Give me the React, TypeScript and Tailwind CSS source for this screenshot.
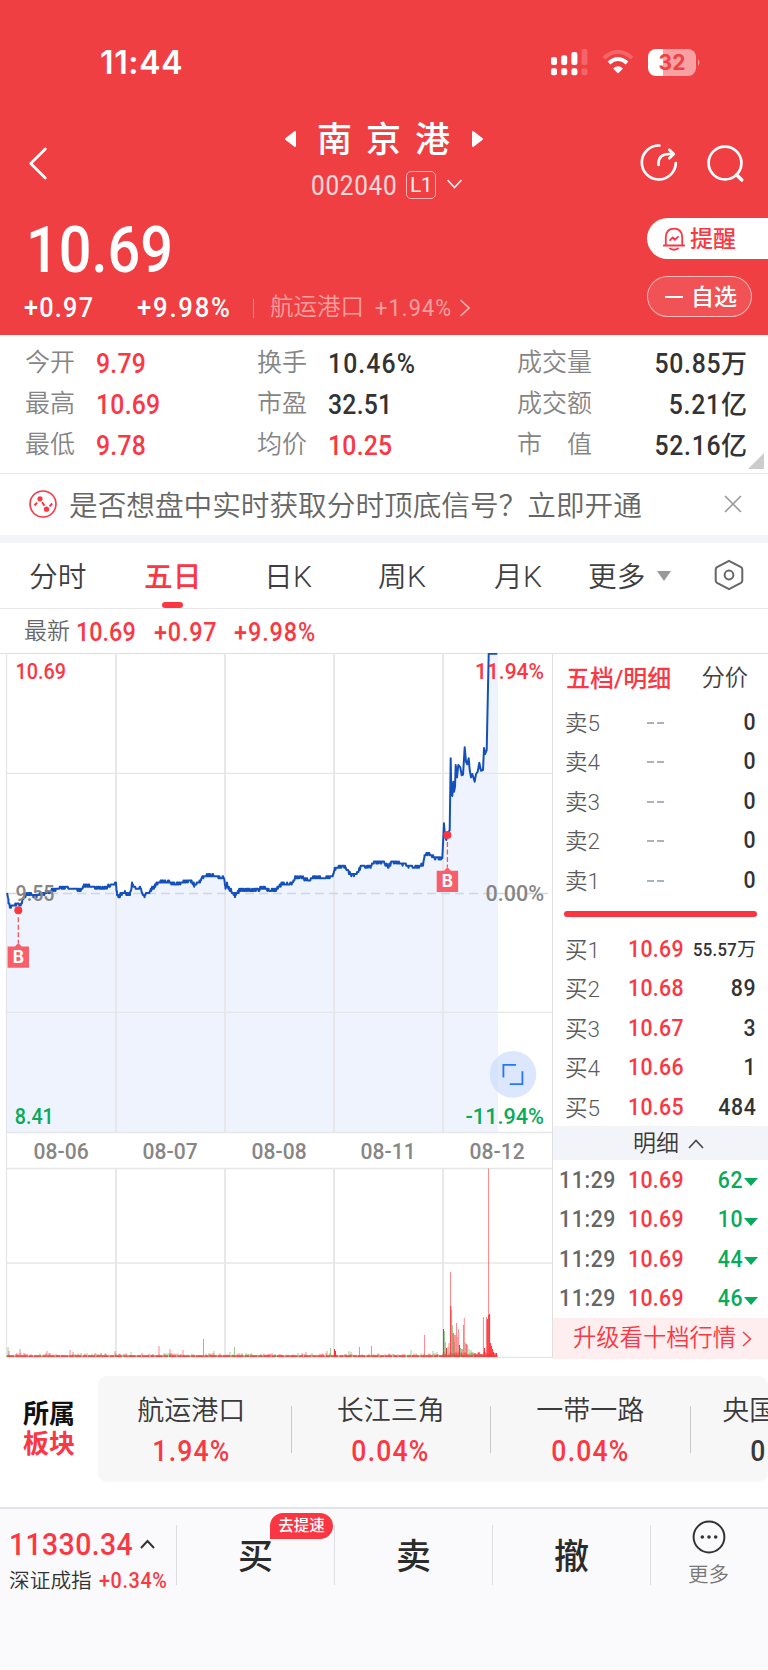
import React from "react";

const rand = (seed: number) => {
  let s = seed;
  return () => {
    s = (s * 1664525 + 1013904223) % 4294967296;
    return s / 4294967296;
  };
};

/* Slow sections of the price curve: anchors joined by one tick per minute. */
const calm: [number, number][] = [
  [7, 893], [8.5, 902], [10, 907], [13, 906], [17, 904], [21, 905], [24, 897], [27, 894], [36, 896], [45, 893],
  [49, 891], [57, 889], [66, 887], [72, 889], [82, 889], [85, 885], [90, 887], [105, 888], [110, 885], [116, 884],
  [117, 894], [119, 896], [124, 892], [130, 894], [132, 884], [136, 888], [141, 889], [144, 896], [148, 893],
  [153, 888], [156, 884], [162, 881], [169, 882], [178, 884], [185, 881], [191, 881], [195, 885], [200, 882],
  [204, 876], [213, 875], [218, 877], [224, 878], [225.5, 889], [227, 884], [230, 890], [235, 895], [241, 889],
  [248, 890], [258, 889], [264, 887], [270, 891], [276, 889], [282, 884], [292, 883], [296, 877], [303, 878],
  [308, 880], [314, 877], [325, 878], [333, 875], [335, 868], [345, 866], [349, 873], [353, 875], [358, 872],
  [361, 867], [371, 866], [374, 862], [384, 862], [388, 867], [392, 862], [403, 864], [414, 867], [423, 865],
  [424.5, 855], [428, 853], [434, 858], [442, 857.5],
];
const surge: [number, number][] = [
  [175, 625], [180, 520], [183, 560], [187, 570], [190, 555], [197, 540], [200, 325], [202, 430], [205, 438],
  [208, 395], [210, 425], [213, 410], [215, 345], [219, 382], [223, 345], [229, 352], [233, 376], [237, 374],
  [242, 292], [246, 335], [250, 343], [254, 325], [257, 360], [261, 382], [265, 372], [272, 395], [276, 372],
  [281, 365], [286, 338], [291, 362], [297, 360], [300, 294], [303, 312], [308, 300], [314, 11], [340, 11],
].map(([x, y]) => [x / 3 + 384, y / 3 + 650] as [number, number]);

const TICK = 2.1;
const r1 = rand(11);
const walk: string[] = [];
for (let i = 0; i < calm.length - 1; i++) {
  const [x0, y0] = calm[i];
  const [x1, y1] = calm[i + 1];
  for (let x = x0; x < x1; x += 0.46) {
    const y = y0 + ((y1 - y0) * (x - x0)) / (x1 - x0) + (r1() - 0.5) * 2.9;
    walk.push(`${x.toFixed(1)},${(893 + Math.round((y - 893) / TICK) * TICK).toFixed(1)}`);
  }
}
const linePoints = [...walk, ...surge.map(([x, y]) => `${x.toFixed(1)},${y.toFixed(1)}`)].join(" ");
const areaPoints = `6,1132 ${linePoints} 498,653.6 498,1132`;

/* Volume bars: x, height, colour flag */
type Bar = [number, number, "r" | "g" | "R"];
const r2 = rand(5);
const bars: Bar[] = [];
for (let x = 7; x < 443; x += 1) {
  const v = r2();
  bars.push([x, 1.5 + v * v * v * 2.4, r2() > 0.62 ? "g" : "r"]);
}
const spikes: Bar[] = [
  [8, 10, "g"], [9, 6, "r"], [20, 8, "r"], [47, 6, "r"], [70, 7, "r"], [73, 5, "r"], [101, 4, "r"], [115, 6, "r"],
  [131, 5, "g"], [159, 11, "r"], [170, 8, "r"], [183, 7, "r"], [203.5, 18, "r"], [214, 6, "g"], [234.5, 10, "g"],
  [230, 5, "g"], [306, 5, "r"], [327, 6, "r"], [330.5, 9, "g"], [334.5, 8, "R"], [335.5, 6, "R"], [349, 6, "g"],
  [351, 5, "g"], [359.5, 10, "r"], [371.5, 11, "r"], [411, 7, "g"], [424.5, 22, "r"], [433, 6, "g"], [437, 5, "g"],
  [443.5, 28, "R"], [444.5, 26, "g"], [445.5, 15, "g"], [446.5, 9, "R"], [448, 10, "g"], [449, 14, "r"],
  [450.5, 85, "r"], [450.8, 51, "R"], [451.6, 47, "g"], [452.4, 32, "g"], [453.2, 24, "R"], [454.2, 15, "g"],
  [455, 22, "R"], [456.5, 34, "r"], [457.5, 20, "g"], [458.6, 28, "r"], [459.5, 12, "R"], [460.5, 9, "g"],
  [462, 8, "R"], [463.5, 32, "r"], [464.3, 39, "r"], [465.2, 15, "g"], [466.2, 13, "R"], [467.5, 12, "g"],
  [469, 8, "g"], [471, 7, "g"], [473, 5, "g"], [475, 4, "R"], [477, 3, "g"], [479, 5, "R"], [481, 3, "R"],
  [483.4, 40, "r"], [484.5, 9, "R"], [485.5, 5, "g"], [486.5, 40, "r"], [487.4, 38, "R"], [488.5, 188.5, "r"],
  [488.8, 42, "R"], [489.6, 43, "R"], [490.6, 14, "R"], [491.6, 11, "R"], [492.6, 8, "R"], [493.6, 5, "R"],
  [495, 4, "R"], [496.5, 4, "R"],
];
for (let x = 443; x < 498; x += 1) bars.push([x, 2 + r2() * 3, r2() > 0.6 ? "g" : "R"]);
const barColor = { r: "#ff3b41", g: "#5fae4c", R: "#fb2f35" };

function Chart() {
  return (
    <svg className="block h-[705px] w-[552px] shrink-0" viewBox="0 653 552 705">
      <polygon points={areaPoints} fill="#eff3fe" />
      <g stroke="#e6e6e8" strokeWidth="1.3">
        <path d="M6.5 653V1358" />
        <path d="M6 773.3H552M6 1012.3H552M6 1132.5H552M6 1168.5H552M6 1263H552M6 1357.3H552" />
        <path d="M116 653V1132M225 653V1132M334 653V1132M443 653V1132M116 1168V1357M225 1168V1357M334 1168V1357M443 1168V1357" strokeWidth="1.8" />
      </g>
      <path d="M7 893.5H549" stroke="#ccd8e4" strokeWidth="1.4" strokeDasharray="9 5" />
      <g>
        {[...bars, ...spikes].map(([x, h, c], i) => (
          <rect key={i} x={x - 0.5} y={1357 - h} width="1" height={h} fill={barColor[c]} opacity={c === "R" ? 1 : h > 4 ? 0.6 : 0.8} />
        ))}
        <path d="M7 1356.2H497" stroke="#f0403a" strokeWidth="1.8" strokeDasharray="7 1.5 4 1" opacity=".85" />
      </g>
      <polyline points={linePoints} fill="none" stroke="#1450ba" strokeWidth="2" strokeLinejoin="round" />
      <g className="font-[Roboto] font-medium" fontSize="21.5">
        <text x="15.5" y="678.8" fill="#fb3743" textLength="50.5" lengthAdjust="spacingAndGlyphs">10.69</text>
        <text x="475" y="678.8" fill="#fb3743" textLength="69" lengthAdjust="spacingAndGlyphs">11.94%</text>
        <text x="15.5" y="901" fill="#868686" textLength="39" lengthAdjust="spacingAndGlyphs">9.55</text>
        <text x="485.5" y="901" fill="#868686" textLength="58.5" lengthAdjust="spacingAndGlyphs">0.00%</text>
        <text x="14.8" y="1123.7" fill="#08ab5c" textLength="39" lengthAdjust="spacingAndGlyphs">8.41</text>
        <text x="465.5" y="1123.7" fill="#08ab5c" textLength="78.5" lengthAdjust="spacingAndGlyphs">-11.94%</text>
        {["08-06", "08-07", "08-08", "08-11", "08-12"].map((d, i) => (
          <text key={d} x={33.6 + i * 109} y="1159" fill="#868686" textLength="55" lengthAdjust="spacingAndGlyphs">{d}</text>
        ))}
      </g>
      {[[18.3, 910.3, 943.3], [447.4, 835, 867.6]].map(([x, y, t]) => (
        <g key={x}>
          <path d={`M${x} ${y + 7}V${t}`} stroke="#f7525d" strokeWidth="1.3" strokeDasharray="5 2.5" />
          <circle cx={x} cy={y} r="4" fill="#fb3743" />
          <path d={`M${x - 10.7} ${t + 3.2}h7.2l3.5 -3.6l3.5 3.6h7.2v21.2h-21.4z`} fill="#f95f6b" />
          <text x={x} y={t + 19.8} textAnchor="middle" fill="#fff" fontSize="17" className="font-[Inter] font-bold">B</text>
        </g>
      ))}
      <circle cx="513" cy="1074.4" r="23.3" fill="#c7d9fb" opacity=".62" />
      <path d="M503.4 1077.5V1064.8H516M509.7 1084.2H522.4V1071.3" fill="none" stroke="#2278fa" strokeWidth="1.8" />
    </svg>
  );
}

/* Narrow figures: Roboto drawn at nine tenths of its width. */
function Num({ className = "", t = "tracking-[0.02em]", from = "origin-left", children }: { className?: string; t?: string; from?: string; children: React.ReactNode }) {
  return <span className={`inline-block scale-x-90 font-medium ${from} ${t} ${className}`}>{children}</span>;
}

function StatusBar() {
  return (
    <div className="flex h-[112px] items-start pt-[45px] pl-[100px]">
      <span className="w-[450px] font-[Inter] text-[32px] leading-[36px] font-semibold tracking-[0.02em]">11:44</span>
      <svg className="mt-[4px] h-[27px] w-[38px]" viewBox="0 0 38 27" fill="#fff">
        <rect x="1" y="8" width="6" height="8" rx="2" /><rect x="11.2" y="6.3" width="6" height="9.7" rx="2" />
        <rect x="21.4" y="3" width="6" height="13" rx="2" /><rect x="31.5" y="0" width="6" height="16" rx="2" opacity=".2" />
        <rect x="1" y="19.3" width="6" height="7" rx="2" /><rect x="11.2" y="19.3" width="6" height="7" rx="2" />
        <rect x="21.4" y="19.3" width="6" height="7" rx="2" /><rect x="31.5" y="19.3" width="6" height="7" rx="2" opacity=".2" />
      </svg>
      <svg className="mt-[4px] ml-[14px] h-[27px] w-[32px]" viewBox="0 0 32 27">
        <path d="M2 9Q16 -3.5 30 9" fill="none" stroke="#fff" strokeWidth="4" opacity=".2" />
        <path d="M7 14Q16 6 25 14" fill="none" stroke="#fff" strokeWidth="4" />
        <path d="M11 19.4Q16 15.2 21 19.4L16 24.6Z" fill="#fff" />
      </svg>
      <div className="mt-[4px] ml-[14px] flex h-[27px] w-[48px] items-center justify-center rounded-[8px] bg-[linear-gradient(90deg,#fff_32%,#f8a0a2_32%)] font-[Inter] text-[21px] leading-none font-bold text-[#f04042]">
        32
      </div>
      <svg className="mt-[14px] ml-[2px] h-[7px] w-[3px]" viewBox="0 0 3 7"><path d="M0 0Q3 3.5 0 7Z" fill="#f8a0a2" /></svg>
    </div>
  );
}

function Header() {
  return (
    <header className="h-[335px] bg-[#f03f42] text-white">
      <StatusBar />
      <div className="flex h-[96px] items-start">
        <svg className="mt-[34px] ml-[27px] h-[34px] w-[22px]" viewBox="0 0 22 34" fill="none" stroke="#fff" strokeWidth="2.7" strokeLinecap="round" strokeLinejoin="round">
          <path d="M18.3 3L3.7 17.5L18.3 32" />
        </svg>
        <div className="ml-[162px] flex w-[346px] flex-col items-center">
          <div className="flex h-[54px] items-center">
            <svg className="h-[18px] w-[13px]" viewBox="0 0 13 18"><path d="M11 2L2 9L11 16Z" fill="#fff" stroke="#fff" strokeWidth="2" strokeLinejoin="round" /></svg>
            <h1 className="ml-[20px] pt-[3px] text-[35px] leading-none font-medium tracking-[14px]">南京港</h1>
            <svg className="ml-[7px] h-[18px] w-[13px]" viewBox="0 0 13 18"><path d="M2 2L11 9L2 16Z" fill="#fff" stroke="#fff" strokeWidth="2" strokeLinejoin="round" /></svg>
          </div>
          <div className="flex h-[38px] items-center pl-[6px] text-white/80">
            <Num className="mt-[2px] w-[87px] text-[27px] leading-none !font-normal" t="tracking-[0.03em]">002040</Num>
            <span className="ml-[8px] flex h-[28px] w-[30px] items-center justify-center rounded-[5px] border border-white/60 text-[21px] leading-none tracking-[-0.03em] text-white/90">L1</span>
            <svg className="-mt-[2px] ml-[10px] h-[12px] w-[17px]" viewBox="0 0 17 12" fill="none" stroke="#fff" strokeWidth="1.7" opacity=".9"><path d="M1.5 2L8.5 9.5L15.5 2" /></svg>
          </div>
        </div>
        <svg className="mt-[31px] ml-[82px] h-[40px] w-[40px]" viewBox="0 0 40 40" fill="none" stroke="#fff" strokeWidth="2.7" strokeLinecap="round" strokeLinejoin="round">
          <path d="M20.5 2.5A17 17 0 1 0 36.8 20M19.5 22V20Q20 11 30 11H34.5M30.3 6.8L34.8 11L30.3 15.2" />
        </svg>
        <svg className="mt-[31px] ml-[27px] h-[40px] w-[40px]" viewBox="0 0 40 40" fill="none" stroke="#fff" strokeWidth="2.7" strokeLinecap="round">
          <circle cx="19" cy="20" r="16.4" /><path d="M30.5 31.8L35.8 37" strokeWidth="3.4" />
        </svg>
      </div>
      <div className="flex h-[127px] justify-between pl-[24px]">
        <div className="pt-[4px]">
          <Num className="ml-[2px] !block h-[77px] text-[64px] leading-[77px]" t="tracking-[0em]">10.69</Num>
          <div className="mt-px flex h-[36px] items-center">
            <Num className="w-[113px] text-[28px] leading-none" t="tracking-[0.05em]">+0.97</Num>
            <Num className="w-[116px] text-[28.5px] leading-none" t="tracking-[0.07em]">+9.98%</Num>
            <span className="h-[19px] w-px bg-white/40" />
            <span className="ml-[16px] flex items-center text-white/50">
              <span className="text-[23.5px] leading-none font-[350]">航运港口</span>
              <Num className="ml-[11px] w-[77px] text-[24px] leading-none !font-normal" t="tracking-[0.055em]">+1.94%</Num>
              <svg className="ml-[7px] h-[18px] w-[12px]" viewBox="0 0 12 18" fill="none" stroke="#fff" strokeWidth="1.7" opacity=".6"><path d="M1.5 1L10 9L1.5 17" /></svg>
            </span>
          </div>
        </div>
        <div className="flex flex-col gap-[17px] pt-[10px]">
          <div className="flex h-[41px] w-[121px] items-center rounded-l-full bg-white pl-[15px] text-[23px] leading-none font-medium text-[#fb3743]">
            <svg className="mr-[4px] h-[24px] w-[24px]" viewBox="0 0 24 24" fill="none" stroke="#fb3743" strokeWidth="1.8" strokeLinecap="round" strokeLinejoin="round">
              <path d="M1.8 18.5H22.2M3.8 18.2V10Q4.2 1.6 12 1.6Q19.8 1.6 20.2 10V18.2M8 21.5Q12 24 16 21.5" /><path d="M8 13.2L10.8 10.4L12.8 12.8L16 9.8" />
            </svg>
            <span className="pt-px">提醒</span>
          </div>
          <div className="flex h-[41px] w-[105px] items-center rounded-full border border-white/60 bg-white/10 pl-[17px] text-[23px] leading-none font-medium">
            <span className="mr-[8px] h-[2px] w-[18px] bg-white" /><span className="pt-px">自选</span>
          </div>
        </div>
      </div>
    </header>
  );
}

const RED = "text-[#fb3743]";
const stats = [
  ["今开", "9.79", RED, "换手", "10.46%", "tracking-[0.045em]", "成交量", "50.85", "万"],
  ["最高", "10.69", RED, "市盈", "32.51", "tracking-[0.01em]", "成交额", "5.21", "亿"],
  ["最低", "9.78", RED, "均价", "10.25", "tracking-[0.01em]", "市　值", "52.16", "亿"],
];

function Stats() {
  const label = "text-[25px] leading-none font-[350] text-[#858585]";
  return (
    <section className="relative h-[139px] border-b border-[#e9e9e9] pt-[7px] text-[#333]">
      {stats.map((s, i) => (
        <div key={s[0]} className="flex h-[41px] items-center pr-[21px] pl-[25px] text-[27.5px] leading-none">
          <span className={`w-[70px] ${label}`}>{s[0]}</span>
          <Num className={`mt-[2px] ml-px w-[161px] ${s[2]}`} t="tracking-[0.01em]">{s[1]}</Num>
          <span className={`w-[70px] ${label}`}>{s[3]}</span>
          <Num className={`mt-[2px] ml-px w-[189px] ${i === 2 ? RED : ""}`} t={s[5]}>{s[4]}</Num>
          <span className={label}>{s[6]}</span>
          <Num className="mt-[2px] ml-auto" from="origin-right" t="tracking-[0.03em]">{s[7]}</Num>
          <span className="mt-[2px] text-[26px] font-medium">{s[8]}</span>
        </div>
      ))}
      <svg className="absolute right-[4px] bottom-[4px] h-[16px] w-[16px]" viewBox="0 0 16 16"><path d="M16 0V16H0Z" fill="#ccc" /></svg>
    </section>
  );
}

function Banner() {
  return (
    <section className="flex h-[61px] items-center pr-[26px] pl-[29px]">
      <svg className="-mt-px h-[28px] w-[28px]" viewBox="0 0 28 28" fill="none" stroke="#fb3743" strokeWidth="1.6">
        <circle cx="14" cy="14" r="13" /><circle cx="11" cy="8.8" r="2.6" fill="#fb3743" stroke="none" /><circle cx="17.5" cy="19.2" r="2.6" fill="#fb3743" stroke="none" />
        <path d="M5.5 15.5L8 12.6M13 12.2L15.5 15.6M20.5 16.4L23.2 13.5" strokeWidth="2" />
      </svg>
      <span className="ml-[12px] pt-[4px] text-[28.65px] leading-none font-[350] whitespace-nowrap text-[#666]">是否想盘中实时获取分时顶底信号？立即开通</span>
      <svg className="-mt-px ml-auto h-[18px] w-[18px]" viewBox="0 0 18 18" stroke="#999" strokeWidth="1.6"><path d="M1 1L17 17M17 1L1 17" /></svg>
    </section>
  );
}

function Tabs() {
  return (
    <nav className="flex h-[66px] items-center border-b border-[#e6e6e8] pt-[4px] pl-[29px] text-[28.7px] leading-none font-[350] text-[#3f3f3f]">
      <span className="w-[115px]">分时</span>
      <span className="relative flex h-full w-[120px] items-center font-medium text-[#fb3743]">
        五日
        <span className="absolute bottom-0 left-[18px] h-[6px] w-[21px] rounded-[3px] bg-[#fb3743]" />
      </span>
      <span className="w-[114px]">日<span className="inline-block origin-left scale-x-105">K</span></span>
      <span className="w-[116px]">周<span className="inline-block origin-left scale-x-105">K</span></span>
      <span className="w-[94px]">月<span className="inline-block origin-left scale-x-105">K</span></span>
      <span>更多</span>
      <svg className="-mt-[4px] ml-[12px] h-[10px] w-[14px]" viewBox="0 0 14 10"><path d="M0 0H14L7 10Z" fill="#999" /></svg>
      <svg className="-mt-[6px] ml-[42px] h-[32px] w-[32px]" viewBox="0 0 32 32" fill="none" stroke="#666" strokeWidth="2">
        <path d="M16 1.8L28 8.2Q29.3 9 29.3 10.5V21.5Q29.3 23 28 23.8L16 30.2L4 23.8Q2.7 23 2.7 21.5V10.5Q2.7 9 4 8.2Z" strokeLinejoin="round" /><circle cx="16" cy="16" r="4.4" />
      </svg>
    </nav>
  );
}

const bids = [["买1", "10.69", "55.57", "万"], ["买2", "10.68", "89"], ["买3", "10.67", "3"], ["买4", "10.66", "1"], ["买5", "10.65", "484"]];

function OrderBook() {
  const row = "flex h-[39.5px] items-center pr-[12px] pl-[12px] text-[23.6px] leading-none text-[#333]";
  return (
    <aside className="h-[705px] w-[216px] shrink-0 border-t border-l border-[#e0e0e2]">
      <div className="flex h-[49px] items-center justify-between pr-[20px] pl-[13px] text-[23.3px] leading-none font-[350] text-[#3f3f3f]">
        <span className="text-[24px] font-medium text-[#fb3743]">五档/明细</span>
        <span>分价</span>
      </div>
      {["卖5", "卖4", "卖3", "卖2", "卖1"].map((l) => (
        <div key={l} className={row}>
          <span className="w-[82px] text-[22.5px] font-[350] text-[#5c5c5c]">{l}</span>
          <span className="flex gap-[3px]"><i className="h-[2px] w-[7px] bg-[#a9b3bf]" /><i className="h-[2px] w-[7px] bg-[#a9b3bf]" /></span>
          <Num className="ml-auto" from="origin-right">0</Num>
        </div>
      ))}
      <div className="mt-[10.5px] ml-[11px] h-[6px] w-[193px] rounded-full bg-[#f93641]" />
      <div className="mt-[13px]">
        {bids.map(([l, p, q, unit]) => (
          <div key={l} className={row}>
            <span className="w-[63px] shrink-0 text-[22.5px] font-[350] text-[#5c5c5c]">{l}</span>
            <Num className="w-[55px] shrink-0 text-[#fb3743]" t="tracking-[0.015em]">{p}</Num>
            <Num className={unit ? "ml-auto text-[18.5px]" : "ml-auto"} from="origin-right" t={unit ? "tracking-[0.02em]" : "tracking-[0.03em]"}>{q}</Num>
            {unit && <span className="text-[19px]">{unit}</span>}
          </div>
        ))}
      </div>
      <div className="-mt-[1.5px] mb-px flex h-[34px] items-center justify-center bg-[#f3f4f9] pt-[1px] pl-[16px] text-[23px] leading-none font-[350] text-[#3a3a3a]">
        明细
        <svg className="ml-[9px] h-[10px] w-[16px]" viewBox="0 0 16 10" fill="none" stroke="#444" strokeWidth="1.6"><path d="M1 9L8 1.5L15 9" /></svg>
      </div>
      {["62", "10", "44", "46"].map((q) => (
        <div key={q} className={`${row} !pl-[6px]`}>
          <Num className="w-[69px] text-[#666]" t="tracking-[0.03em]">11:29</Num>
          <Num className="text-[#fb3743]" t="tracking-[0.015em]">10.69</Num>
          <Num className="ml-auto text-[#08ab5c]" from="origin-right" t="tracking-[0.03em]">{q}</Num>
          <svg className="mt-[3px] -mr-[2px] ml-px h-[8px] w-[14px]" viewBox="0 0 14 8"><path d="M0 0H14L7 8Z" fill="#08ab5c" /></svg>
        </div>
      ))}
      <div className="-mt-px flex h-[41px] items-center bg-[#ffeef0] pt-px pl-[20px] text-[23.3px] leading-none font-[350] text-[#fb3743]">
        升级看十档行情
        <svg className="ml-[6px] h-[16px] w-[10px]" viewBox="0 0 10 16" fill="none" stroke="#fb3743" strokeWidth="1.5"><path d="M1 1L8.5 8L1 15" /></svg>
      </div>
    </aside>
  );
}

const sectors = [["航运港口", "1.94%"], ["长江三角", "0.04%"], ["一带一路", "0.04%"], ["央国企改革", "0.00%"]];

function Sectors() {
  return (
    <section className="flex h-[149px] overflow-hidden pt-[18px]">
      <div className="w-[98px] shrink-0 pt-[23px] pl-[23px] text-[26px] leading-[30px] font-bold text-[#111]">
        所属<br /><span className="text-[#fb3743]">板块</span>
      </div>
      <div className="h-[106px] w-[670px] overflow-hidden rounded-[9px] bg-[#f7f7f8]">
        <div className="-ml-[6px] flex">
          {sectors.map(([name, pct], i) => (
            <div key={name} className="flex h-[106px] w-[199.5px] shrink-0 items-center">
              <div className="flex flex-1 flex-col items-center pt-[7px] text-[27px] leading-none font-[350] whitespace-nowrap text-[#3a3a3a]">
                <span>{name}</span>
                <Num className={`mt-[12px] text-[29.5px] ${i < 3 ? RED : ""}`} from="origin-center" t="tracking-[0.045em]">{pct}</Num>
              </div>
              <span className="h-[47px] w-px bg-[#c9c9cc]" />
            </div>
          ))}
        </div>
      </div>
    </section>
  );
}

function BottomBar() {
  const action = "relative flex h-[60px] w-[158px] items-center justify-center border-l border-[#dddee2] pt-[5px] text-[35px] leading-none font-medium text-[#2b2b2b]";
  return (
    <footer className="flex h-[163px] items-start border-t-2 border-[#e3e4ea] bg-[#fafafc] pt-[16px]">
      <div className="w-[176px] shrink-0 pt-[4px] pl-[9px]">
        <div className="flex h-[32px] items-center">
          <Num className="w-[124px] text-[31.5px] leading-none text-[#fb3743]" t="tracking-[0.015em]">11330.34</Num>
          <svg className="-mt-[3px] ml-[7px] h-[10px] w-[15px]" viewBox="0 0 15 10" fill="none" stroke="#333" strokeWidth="2"><path d="M1 9L7.5 2L14 9" /></svg>
        </div>
        <div className="mt-[8px] flex h-[24px] items-center text-[20.7px] leading-none font-[350] whitespace-nowrap text-[#333]">
          深证成指<Num className="ml-[7px] text-[22px] text-[#fb3743]" t="tracking-[0.03em]">+0.34%</Num>
        </div>
      </div>
      <div className={action}>
        买
        <span className="absolute -top-[12px] left-[93px] flex h-[26px] w-[63px] items-center justify-center rounded-full rounded-bl-none bg-[#f93641] pt-px text-[15.5px] leading-none text-white">去提速</span>
      </div>
      <div className={action}>卖</div>
      <div className={action}>撤</div>
      <div className="flex h-[60px] flex-1 flex-col items-center border-l border-[#dddee2] pr-[2px]">
        <svg className="-mt-[5px] h-[34px] w-[34px] shrink-0" viewBox="0 0 34 34" fill="none" stroke="#333" strokeWidth="2">
          <circle cx="17" cy="17" r="15.4" /><g fill="#333" stroke="none"><circle cx="10.3" cy="17" r="1.8" /><circle cx="17" cy="17" r="1.8" /><circle cx="23.7" cy="17" r="1.8" /></g>
        </svg>
        <span className="mt-[11px] text-[20.5px] leading-none font-[350] text-[#777]">更多</span>
      </div>
    </footer>
  );
}

export default function App() {
  return (
    <div className="h-[1670px] w-[768px] overflow-hidden bg-white font-[Roboto,'Noto_Sans_CJK_SC',sans-serif]">
      <Header />
      <Stats />
      <Banner />
      <div className="h-[8px] bg-[#f3f4f9]" />
      <Tabs />
      <div className="flex h-[44px] items-center pt-[1px] pl-[24px]">
        <span className="text-[23px] leading-none font-[350] text-[#666]">最新</span>
        <Num className="ml-[6px] w-[78px] text-[26px] leading-none text-[#fb3743]" t="tracking-[0em]">10.69</Num>
        <Num className="w-[80px] text-[26px] leading-none text-[#fb3743]" t="tracking-[0.035em]">+0.97</Num>
        <Num className="text-[26px] leading-none text-[#fb3743]" t="tracking-[0.04em]">+9.98%</Num>
      </div>
      <div className="flex">
        <div className="border-t border-[#e0e0e2]"><div className="-mt-px"><Chart /></div></div>
        <OrderBook />
      </div>
      <Sectors />
      <BottomBar />
    </div>
  );
}
